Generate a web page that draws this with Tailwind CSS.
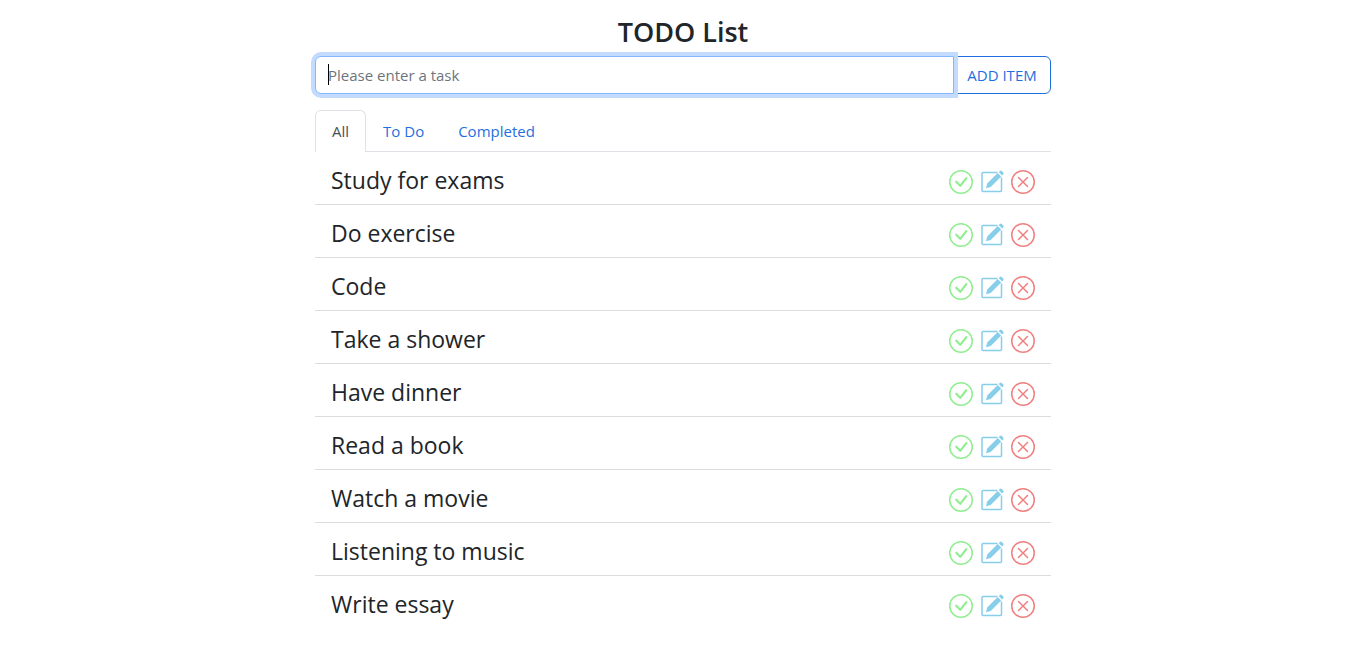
<!DOCTYPE html>
<html lang="en">
<head>
<meta charset="utf-8">
<meta name="viewport" content="width=device-width, initial-scale=1">
<title>TODO List</title>
<script src="https://cdn.jsdelivr.net/npm/@tailwindcss/browser@4"></script>
</head>
<body class="bg-white font-['Open_Sans',sans-serif] text-[15px] leading-6 text-[#212529]">
<svg class="hidden" aria-hidden="true">
  <symbol id="done" viewBox="0 0 16 16"><path d="M8 15A7 7 0 1 1 8 1a7 7 0 0 1 0 14zm0 1A8 8 0 1 0 8 0a8 8 0 0 0 0 16z"/><path d="M10.97 4.97a.235.235 0 0 0-.02.022L7.477 9.417 5.384 7.323a.75.75 0 0 0-1.06 1.06L6.97 11.03a.75.75 0 0 0 1.079-.02l3.992-4.99a.75.75 0 0 0-1.071-1.05z"/></symbol>
  <symbol id="edit" viewBox="0 0 24 24"><path d="M17.5 2.500H3Q2 2.500 2 3.500V20.500Q2 21.500 3 21.500H20.500Q21.500 21.500 21.500 20.500V7.500" fill="none" stroke="currentColor" stroke-width="1.500"/><path d="M6 18.200L7.200 13.600 17.700 3.100 21.200 6.600 10.700 17.100ZM18.700 2.100L19.900.900Q20.900.200 21.800.900L23.300 2.400Q24 3.300 23.300 4.200L22.100 5.500Z"/></symbol>
  <symbol id="remove" viewBox="0 0 16 16"><path d="M8 15A7 7 0 1 1 8 1a7 7 0 0 1 0 14zm0 1A8 8 0 1 0 8 0a8 8 0 0 0 0 16z"/><path d="M4.646 4.646a.5.5 0 0 1 .708 0L8 7.293l2.646-2.647a.5.5 0 0 1 .708.708L8.707 8l2.647 2.646a.5.5 0 0 1-.708.708L8 8.707l-2.646 2.647a.5.5 0 0 1-.708-.708L7.293 8 4.646 5.354a.5.5 0 0 1 0-.708z"/></symbol>
</svg>
<main class="mx-auto w-full max-w-[736px] pt-4">
  <h1 class="mb-2 text-center text-[27px] leading-8 font-semibold">TODO List</h1>
  <form class="mb-4 flex" onsubmit="return false">
    <div class="relative z-10 flex min-w-0 flex-1">
      <input type="text" aria-label="Task" placeholder="Please enter a task" autofocus class="h-[38px] w-full rounded-l-md border border-[#86b7fe] bg-white px-3 caret-transparent shadow-[0_0_0_4px_#c2dbfe] outline-none placeholder:text-[#6c757d]">
      <span class="absolute top-2 left-[13px] h-[21px] w-px bg-black" aria-hidden="true"></span>
    </div>
    <button class="-ml-px h-[38px] w-[98px] rounded-r-md border border-[#1f6fe0] text-[#1f6fe0]">ADD ITEM</button>
  </form>
  <nav class="flex border-b border-[#dee2e6]" aria-label="Filter">
    <a href="#" aria-current="page" class="-mb-px rounded-t-md border border-b-0 border-[#dee2e6] bg-white px-4 py-2 text-[#495057]">All</a>
    <a href="#" class="border border-b-0 border-transparent px-4 py-2 text-[#1f6fe0]">To Do</a>
    <a href="#" class="border border-b-0 border-transparent px-4 py-2 text-[#1f6fe0]">Completed</a>
  </nav>
  <ul id="tasks"></ul>
</main>
<template id="row">
  <li class="flex h-[53px] items-center border-b border-[#dcdcdc] px-4 last:border-transparent">
    <span class="flex-1 pt-1 text-[23px] leading-9"></span>
    <div class="flex gap-[7px] pt-2">
      <button aria-label="Complete" class="text-[#90ee90]"><svg class="size-6" fill="currentColor"><use href="#done"/></svg></button>
      <button aria-label="Edit" class="text-[#87ceeb]"><svg class="size-6" fill="currentColor"><use href="#edit"/></svg></button>
      <button aria-label="Delete" class="text-[#f08080]"><svg class="size-6" fill="currentColor"><use href="#remove"/></svg></button>
    </div>
  </li>
</template>
<script>
const list = document.getElementById('tasks'), row = document.getElementById('row');
['Study for exams','Do exercise','Code','Take a shower','Have dinner','Read a book','Watch a movie','Listening to music','Write essay'].forEach(name => {
  const item = row.content.cloneNode(true);
  item.querySelector('span').textContent = name;
  list.append(item);
});
</script>
</body>
</html>
